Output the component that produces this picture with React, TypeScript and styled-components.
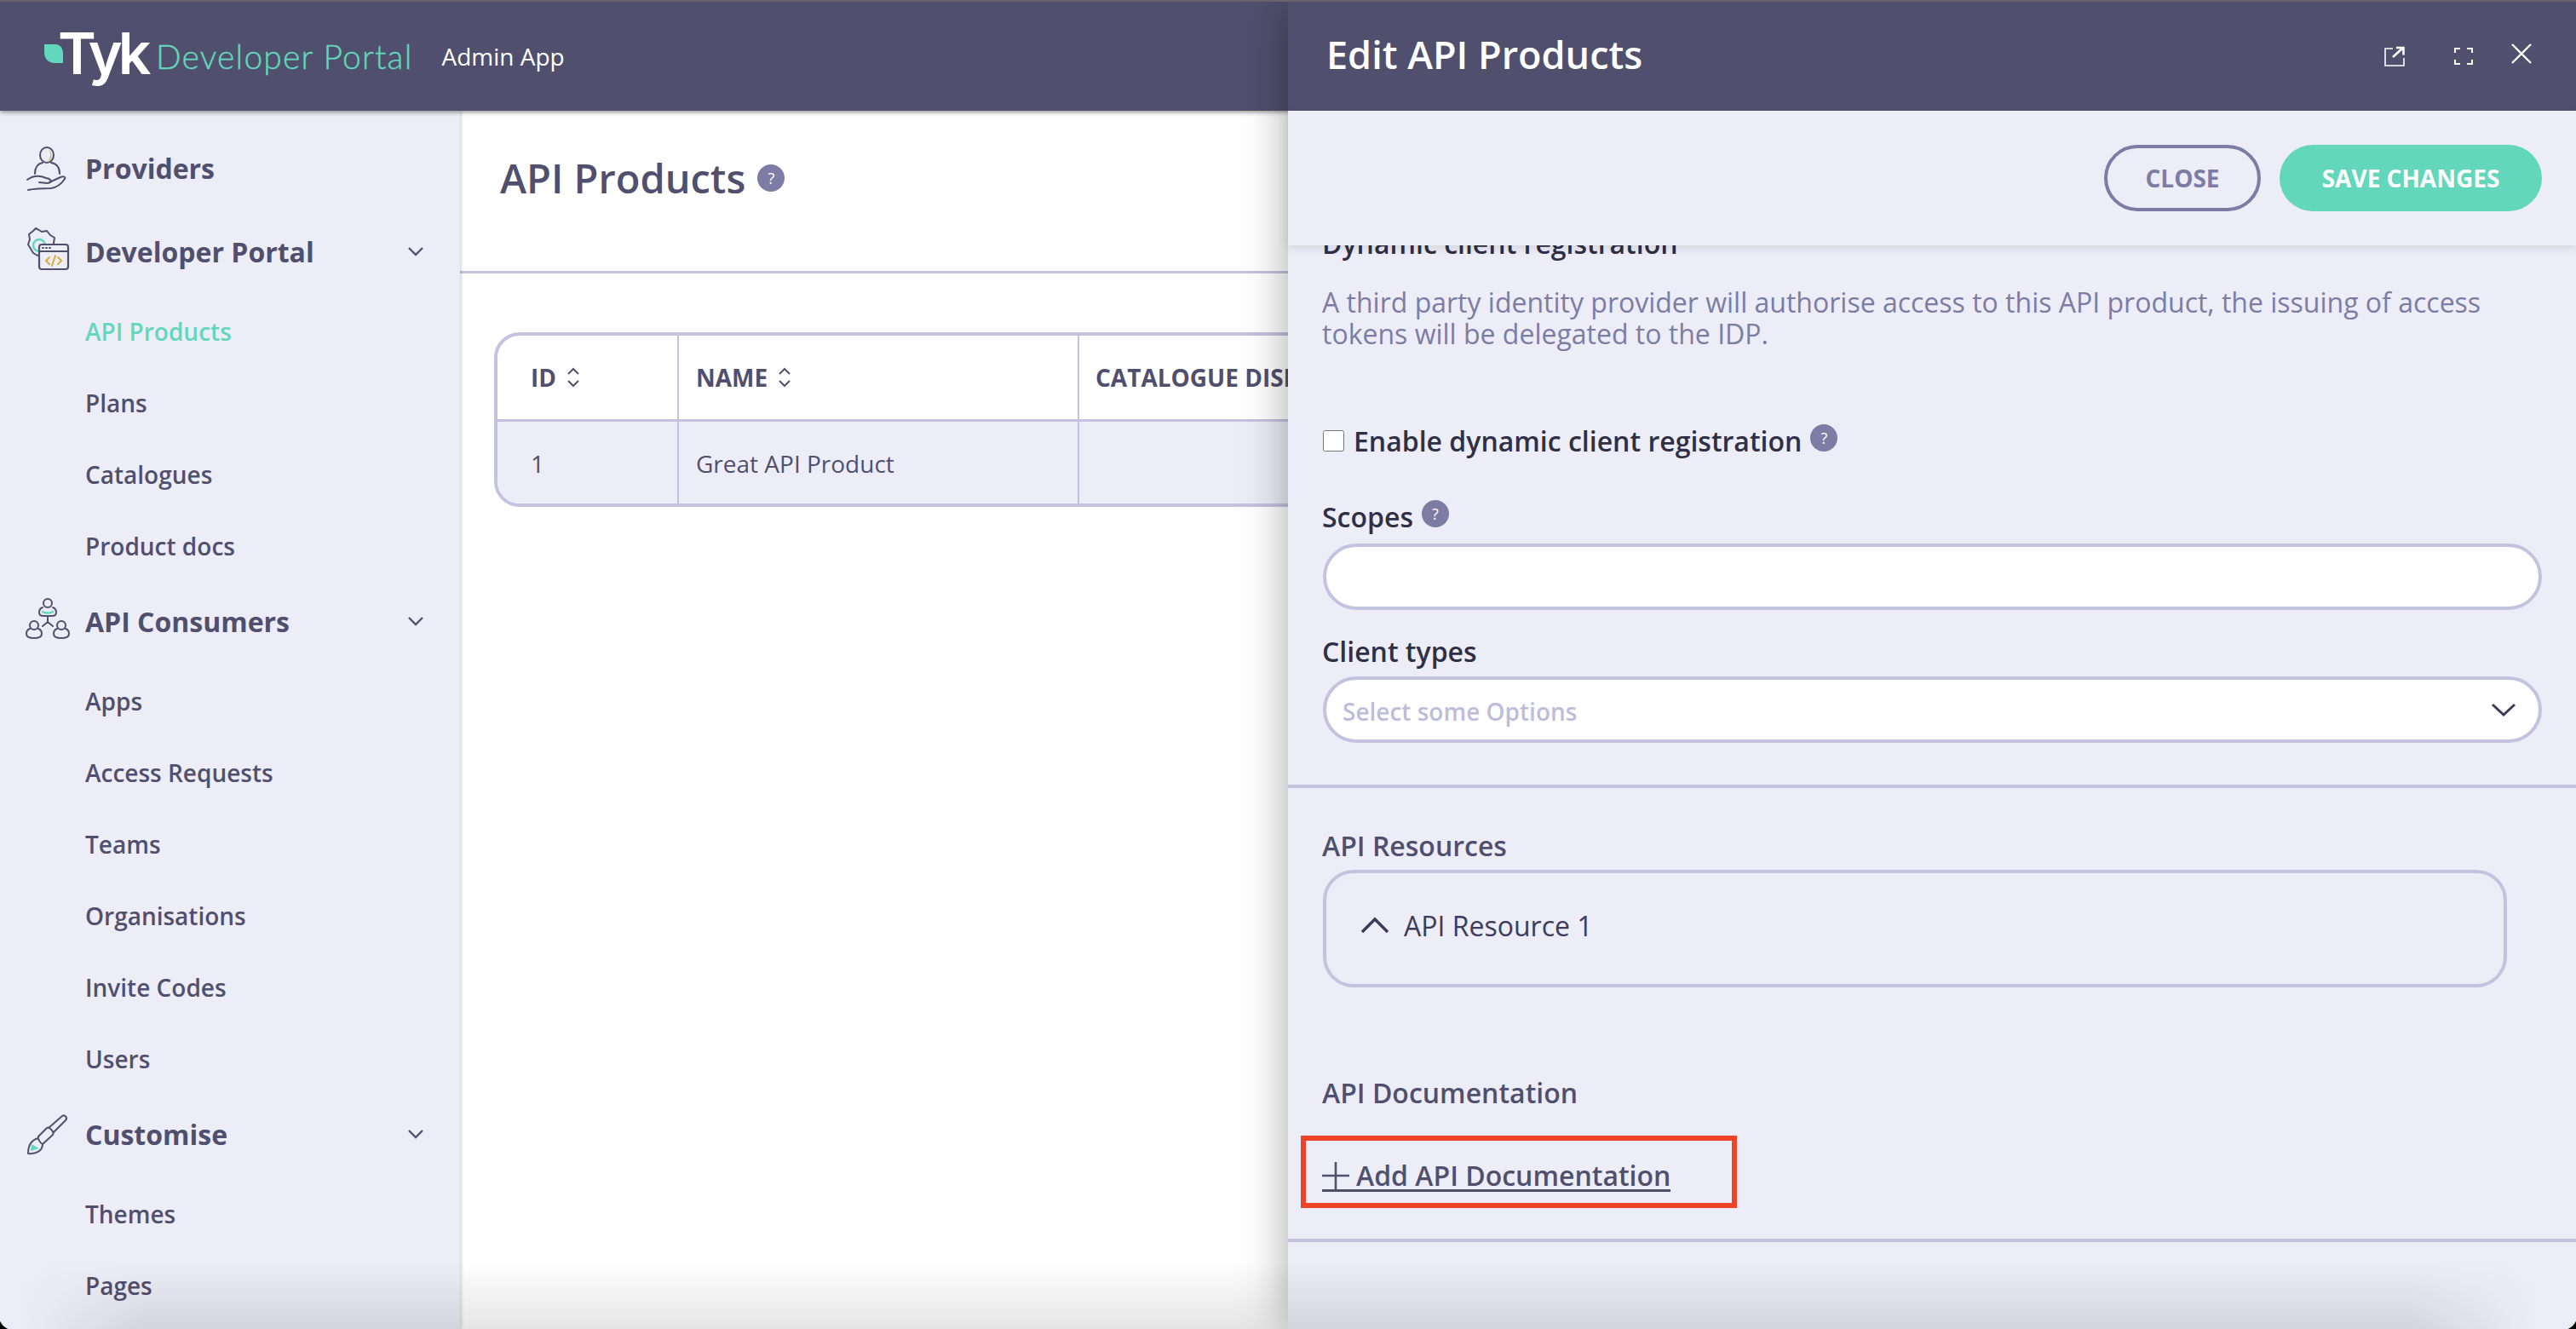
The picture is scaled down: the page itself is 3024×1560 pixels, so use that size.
import React from "react";
import styled, { createGlobalStyle } from "styled-components";

const Global = createGlobalStyle`
  html, body { margin: 0; padding: 0; background: #000; }
  * { box-sizing: border-box; }
`;

const Chevron = () => (
  <svg width="20" height="12" viewBox="0 0 20 12" fill="none" stroke="#50506e" strokeWidth="2.4">
    <polyline points="2,2 10,10 18,2" />
  </svg>
);

const SortIcon = () => (
  <svg width="16" height="24" viewBox="0 0 16 24" fill="none" stroke="#50506e" strokeWidth="2">
    <polyline points="2,8 8,2 14,8" />
    <polyline points="2,16 8,22 14,16" />
  </svg>
);

const ProvidersIcon = () => (
  <svg width="100" height="60" viewBox="0 0 100 60" fill="none" stroke="#50506e" strokeWidth="2" strokeLinecap="round">
    <ellipse cx="55" cy="15" rx="8" ry="9" />
    <path d="M56 8c4 2 5 10 0 14 6-1 6-12 0-14z" fill="#d4ae3a" stroke="none" />
    <path d="M41 37c0-8 4-12 9-13M60 24c6 1 10 5 10 13" />
    <path d="M32 44c7-5 15-5 22-2 7 1 8 6 1 6l-9-1" />
    <path d="M58 47l13-6c4-2 6 0 5 2-4 6-10 10-16 11-9 0-17 0-27 2" />
  </svg>
);

const PortalIcon = () => (
  <svg width="100" height="60" viewBox="0 0 100 60" fill="none" stroke="#50506e" strokeWidth="2" strokeLinecap="round" strokeLinejoin="round">
    <path d="M44 4l5 3 6-1 4 5 5 3-1 6 1 6-4 5-5 3-5-1-6 2-5-3-3-5-3-5 2-6-1-6 5-4 3-3z" />
    <circle cx="46" cy="23" r="7" stroke="#63d7bb" strokeWidth="2.4" />
    <rect x="46" y="22" width="34" height="29" rx="3" fill="#ededf7" strokeWidth="2.2" />
    <line x1="46" y1="30" x2="80" y2="30" />
    <path d="M50 26h1M54 26h1M58 26h1" />
    <path d="M58 37l-4 4 4 4M68 37l4 4-4 4M65 35l-4 12" stroke="#d4ae3a" />
  </svg>
);

const ConsumersIcon = () => (
  <svg width="100" height="60" viewBox="0 0 100 60" fill="none" stroke="#50506e" strokeWidth="2" strokeLinecap="round">
    <circle cx="56" cy="9" r="5" />
    <path d="M50 14c-3 1-4 3-4 6 0 3 2 4 5 4h10c3 0 5-1 5-4 0-3-1-5-4-6" />
    <path d="M50 19c3 2 9 2 12 0" stroke="#63d7bb" strokeWidth="2.6" />
    <path d="M56 25v6M56 31l-6 5M56 31l6 5" />
    <circle cx="40" cy="35" r="5" />
    <path d="M35 39c-3 1-4 3-4 6 0 3 3 5 9 5s9-2 9-5c0-3-1-5-4-6" />
    <circle cx="72" cy="35" r="5" />
    <path d="M67 39c-3 1-4 3-4 6 0 3 3 5 9 5s9-2 9-5c0-3-1-5-4-6" />
  </svg>
);

const BrushIcon = () => (
  <svg width="100" height="60" viewBox="0 0 100 60" fill="none" stroke="#50506e" strokeWidth="2" strokeLinecap="round" strokeLinejoin="round">
    <path d="M57 23L73 9c3-2 7 2 4 5L63 28" />
    <path d="M55 23L45 33c-1 2 2 8 5 9l12-11c2-3-4-10-7-8z" />
    <path d="M45 35c-8 2-12 7-12 18 9 1 17-3 17-11" />
    <path d="M37 42l9 5-10 3z" fill="#63d7bb" stroke="none" />
  </svg>
);

const HelpDot = () => <Help>?</Help>;

const subs1 = ["API Products", "Plans", "Catalogues", "Product docs"];
const subs2 = ["Apps", "Access Requests", "Teams", "Organisations", "Invite Codes", "Users"];
const subs3 = ["Themes", "Pages"];

export default function App() {
  return (
    <>
      <Global />
      <Page>
        <TopBar>
          <Leaf viewBox="0 0 22 22">
            <path d="M0 0h13c6 0 9 5 9 11v11H12C5 22 0 17 0 10z" fill="#63d7bb" />
          </Leaf>
          <Wordmark>Tyk</Wordmark>
          <Product>Developer Portal</Product>
          <AppName>Admin App</AppName>
        </TopBar>

        <Content>
          <Sidebar>
            <NavHead $gap={6}>
              <NavIcon><ProvidersIcon /></NavIcon>
              Providers
            </NavHead>
            <NavHead>
              <NavIcon><PortalIcon /></NavIcon>
              Developer Portal
              <NavChevron><Chevron /></NavChevron>
            </NavHead>
            <SubList>
              {subs1.map((s, i) => (
                <SubItem key={s} $active={i === 0}>{s}</SubItem>
              ))}
            </SubList>
            <NavHead>
              <NavIcon><ConsumersIcon /></NavIcon>
              API Consumers
              <NavChevron><Chevron /></NavChevron>
            </NavHead>
            <SubList>
              {subs2.map((s) => (
                <SubItem key={s}>{s}</SubItem>
              ))}
            </SubList>
            <NavHead>
              <NavIcon><BrushIcon /></NavIcon>
              Customise
              <NavChevron><Chevron /></NavChevron>
            </NavHead>
            <SubList>
              {subs3.map((s) => (
                <SubItem key={s}>{s}</SubItem>
              ))}
            </SubList>
          </Sidebar>

          <Main>
            <PageHead>
              <PageTitle>API Products</PageTitle>
              <HelpDot />
            </PageHead>
            <Table>
              <HeadCell $pad={39}>ID <SortIcon /></HeadCell>
              <HeadCell $pad={20}>NAME <SortIcon /></HeadCell>
              <HeadCell $pad={19} $last>CATALOGUE DISPLAY NAME</HeadCell>
              <BodyCell $pad={39}>1</BodyCell>
              <BodyCell $pad={20}>Great API Product</BodyCell>
              <BodyCell $pad={19} $last />
            </Table>
          </Main>
        </Content>

        <Drawer>
          <DrawerTop>
            <DrawerTitle>Edit API Products</DrawerTitle>
            <DrawerTools>
              <svg width="24" height="24" viewBox="0 0 24 24" fill="none" stroke="#fff" strokeWidth="1.6">
                <path d="M10 3H1v20h22v-9" />
                <path d="M10 13L22 2M14 2h8.5v8.5" strokeWidth="2.6" />
              </svg>
              <svg width="22" height="20" viewBox="0 0 22 20" fill="none" stroke="#fff" strokeWidth="2">
                <path d="M1 6V1h6M15 1h6v5M21 14v5h-6M7 19H1v-5" />
              </svg>
              <CloseGlyph width="24" height="24" viewBox="0 0 24 24" fill="none" stroke="#fff" strokeWidth="2.4">
                <path d="M1 1l22 22M23 1L1 23" />
              </CloseGlyph>
            </DrawerTools>
          </DrawerTop>
          <ActionBar>
            <GhostButton>CLOSE</GhostButton>
            <SaveButton>SAVE CHANGES</SaveButton>
          </ActionBar>
          <DrawerBody>
            <Section>
              <ClippedHeading>Dynamic client registration</ClippedHeading>
              <Description>
                A third party identity provider will authorise access to this API product, the issuing of access tokens will be delegated to the IDP.
              </Description>
              <CheckRow>
                <CheckBox type="checkbox" />
                <FieldLabel>Enable dynamic client registration</FieldLabel>
                <RaisedHelp><HelpDot /></RaisedHelp>
              </CheckRow>
              <LabelRow>
                <FieldLabel>Scopes</FieldLabel>
                <RaisedHelp><HelpDot /></RaisedHelp>
              </LabelRow>
              <TextField />
              <SelectLabel>Client types</SelectLabel>
              <SelectField>
                <Placeholder>Select some Options</Placeholder>
                <svg width="30" height="16" viewBox="0 0 30 16" fill="none" stroke="#3c3c5a" strokeWidth="3">
                  <polyline points="2,2 15,14 28,2" />
                </svg>
              </SelectField>
            </Section>
            <Resources>
              <SectionLabel>API Resources</SectionLabel>
              <ResourceBox>
                <svg width="34" height="20" viewBox="0 0 34 20" fill="none" stroke="#3c3c5a" strokeWidth="3.4">
                  <polyline points="2,18 17,3 32,18" />
                </svg>
                <ResourceName>API Resource 1</ResourceName>
              </ResourceBox>
              <DocsLabel>API Documentation</DocsLabel>
              <Annotated>
                <AddLink>
                  <svg width="32" height="32" viewBox="0 0 32 32" fill="none" stroke="#50506e" strokeWidth="2.6">
                    <path d="M16 0v32M0 16h32" />
                  </svg>
                  Add API Documentation
                </AddLink>
              </Annotated>
            </Resources>
          </DrawerBody>
        </Drawer>

        <BottomFade />
        <Corner $side="left" />
        <Corner $side="right" />
      </Page>
    </>
  );
}

const Page = styled.div`
  position: relative;
  width: 3024px;
  height: 1560px;
  overflow: hidden;
  background: #fff;
  font-family: "Open Sans", sans-serif;
  color: #50506e;
  border-top: 2px solid #66666a;
`;

const TopBar = styled.header`
  position: relative;
  z-index: 2;
  display: flex;
  align-items: center;
  height: 128px;
  padding-left: 52px;
  background: #50506e;
  box-shadow: 0 2px 5px rgba(0, 0, 0, 0.4);
`;

const Leaf = styled.svg`
  width: 22px;
  height: 22px;
  margin-top: -6px;
`;

const Wordmark = styled.div`
  margin-left: -6px;
  margin-top: -8px;
  width: 115px;
  color: #fff;
  font-family: "Inter", sans-serif;
  font-size: 68px;
  font-weight: 600;
  letter-spacing: -5px;
  line-height: 1;
`;

const Product = styled.div`
  color: #63d7bb;
  font-family: "Lato", sans-serif;
  font-weight: 300;
  font-size: 39px;
  letter-spacing: 1.2px;
  -webkit-text-stroke: 0.4px #63d7bb;
`;

const AppName = styled.div`
  margin-left: 34px;
  color: #fff;
  font-size: 28px;
`;

const Content = styled.div`
  display: flex;
  height: 1430px;
`;

const Sidebar = styled.nav`
  position: relative;
  z-index: 1;
  flex: 0 0 540px;
  padding-top: 21px;
  background: #ededf7;
  box-shadow: 1px 0 4px rgba(0, 0, 0, 0.22);
`;

const NavHead = styled.div<{ $gap?: number }>`
  display: flex;
  align-items: center;
  height: 92px;
  margin-bottom: ${(p) => p.$gap ?? 0}px;
  font-size: 32px;
  font-weight: 700;
`;

const NavIcon = styled.span`
  display: flex;
  flex: 0 0 100px;
`;

const NavChevron = styled.span`
  display: flex;
  margin-left: auto;
  margin-right: 42px;
`;

const SubList = styled.div`
  padding-top: 6px;
`;

const SubItem = styled.div<{ $active?: boolean }>`
  display: flex;
  align-items: center;
  height: 84px;
  padding-left: 100px;
  font-size: 28px;
  font-weight: 600;
  color: ${(p) => (p.$active ? "#63d7bb" : "#50506e")};
`;

const Main = styled.main`
  flex: 1;
  min-width: 0;
  padding-left: 40px;
`;

const PageHead = styled.div`
  display: flex;
  align-items: center;
  gap: 14px;
  height: 191px;
  margin-left: -40px;
  padding: 0 0 31px 47px;
  border-bottom: 3px solid #c3c3e0;
`;

const PageTitle = styled.h1`
  margin: 0;
  font-family: "Open Sans", sans-serif;
  font-size: 47px;
  font-weight: 600;
  color: #50506e;
`;

const Help = styled.span`
  display: inline-flex;
  align-items: center;
  justify-content: center;
  width: 32px;
  height: 32px;
  border-radius: 50%;
  background: #7c7ca4;
  color: #fff;
  font-size: 18px;
  font-weight: 400;
  font-family: "Open Sans", sans-serif;
`;

const Table = styled.div`
  display: grid;
  grid-template-columns: 213px 470px 1000px;
  grid-template-rows: 101px 96px;
  width: 1700px;
  margin-top: 69px;
  border: 4px solid #c3c3e0;
  border-radius: 30px;
  overflow: hidden;
`;

const HeadCell = styled.div<{ $pad: number; $last?: boolean }>`
  display: flex;
  align-items: center;
  gap: 12px;
  padding-left: ${(p) => p.$pad}px;
  border-right: ${(p) => (p.$last ? "none" : "2px solid #c3c3e0")};
  border-bottom: 3px solid #c3c3e0;
  font-size: 28px;
  font-weight: 700;
  white-space: nowrap;
`;

const BodyCell = styled.div<{ $pad: number; $last?: boolean }>`
  display: flex;
  align-items: center;
  padding: 2px 0 0 ${(p) => p.$pad}px;
  background: #ededf7;
  border-right: ${(p) => (p.$last ? "none" : "2px solid #c3c3e0")};
  font-size: 28px;
`;

const Drawer = styled.aside`
  position: absolute;
  z-index: 3;
  top: 0;
  right: 0;
  bottom: 0;
  width: 1512px;
  display: flex;
  flex-direction: column;
  background: #ededf7;
  box-shadow: 0 0 50px rgba(0, 0, 0, 0.35);
`;

const DrawerTop = styled.div`
  display: flex;
  align-items: center;
  justify-content: space-between;
  flex: 0 0 128px;
  padding: 0 52px 0 45px;
  background: #50506e;
`;

const DrawerTitle = styled.h2`
  margin: 0 0 6px;
  color: #fff;
  font-family: "Open Sans", sans-serif;
  font-size: 45px;
  font-weight: 600;
`;

const DrawerTools = styled.div`
  display: flex;
  align-items: center;
  gap: 58px;
`;

const CloseGlyph = styled.svg`
  margin: -6px 0 0 -13px;
`;

const ActionBar = styled.div`
  position: relative;
  z-index: 1;
  display: flex;
  justify-content: flex-end;
  align-items: center;
  gap: 22px;
  flex: 0 0 158px;
  padding: 0 40px 1px 0;
  background: #ededf7;
  box-shadow: 0 4px 10px rgba(0, 0, 0, 0.1);
`;

const GhostButton = styled.button`
  width: 184px;
  height: 78px;
  border: 4px solid #7c7ca4;
  border-radius: 39px;
  background: transparent;
  color: #7c7ca4;
  font: 700 28px "Open Sans", sans-serif;
`;

const SaveButton = styled.button`
  width: 308px;
  height: 78px;
  border: none;
  border-radius: 39px;
  background: #63d7bb;
  color: #fff;
  font: 700 28px "Open Sans", sans-serif;
`;

const DrawerBody = styled.div`
  flex: 1;
  overflow: hidden;
`;

const Section = styled.section`
  padding: 0 40px 50px 40px;
  height: 659px;
  border-bottom: 4px solid #c3c3e0;
`;

const ClippedHeading = styled.div`
  margin-top: -22px;
  height: 40px;
  line-height: 40px;
  font-size: 32px;
  font-weight: 600;
  color: #2f2f45;
`;

const Description = styled.p`
  margin: 30px 0 0;
  width: 1400px;
  font-size: 32px;
  line-height: 37px;
  color: #7c7ca4;
`;

const CheckRow = styled.label`
  display: flex;
  align-items: center;
  margin-top: 87px;
  height: 40px;
`;

const CheckBox = styled.input`
  width: 25px;
  height: 25px;
  margin: 0 11px 0 1px;
`;

const FieldLabel = styled.span`
  font-size: 32px;
  font-weight: 600;
  color: #2f2f45;
`;

const RaisedHelp = styled.span`
  display: flex;
  margin: -6px 0 0 10px;
`;

const LabelRow = styled.div`
  display: flex;
  align-items: center;
  margin-top: 49px;
  height: 40px;
`;

const TextField = styled.div`
  height: 78px;
  margin: 12px 0 0 1px;
  border: 4px solid #c3c3e0;
  border-radius: 39px;
  background: #fff;
`;

const SelectLabel = styled.div`
  margin-top: 29px;
  height: 40px;
  line-height: 40px;
  font-size: 32px;
  font-weight: 600;
  color: #2f2f45;
`;

const SelectField = styled(TextField)`
  display: flex;
  align-items: center;
  justify-content: space-between;
  padding: 0 26px 0 19px;
  margin-top: 9px;
`;

const Placeholder = styled.span`
  padding-top: 3px;
  font-size: 28px;
  font-weight: 600;
  color: #bdbddb;
`;

const Resources = styled.section`
  padding: 48px 40px 0 40px;
  height: 533px;
  border-bottom: 4px solid #c3c3e0;
`;

const SectionLabel = styled.div`
  height: 40px;
  line-height: 40px;
  font-size: 32px;
  font-weight: 600;
`;

const ResourceBox = styled.div`
  display: flex;
  align-items: center;
  gap: 17px;
  width: 1390px;
  height: 138px;
  margin: 8px 0 0 1px;
  padding: 0 0 8px 40px;
  border: 4px solid #c3c3e0;
  border-radius: 36px;
`;

const ResourceName = styled.span`
  font-size: 32px;
  font-weight: 500;
  color: #3c3c5a;
`;

const DocsLabel = styled(SectionLabel)`
  margin-top: 104px;
`;

const Annotated = styled.div`
  display: flex;
  align-items: flex-start;
  width: 512px;
  height: 85px;
  margin: 30px 0 0 -25px;
  padding: 24px 0 0 19px;
  border: 6px solid #ee4327;
`;

const AddLink = styled.a`
  display: inline-flex;
  align-items: flex-end;
  gap: 8px;
  height: 36px;
  line-height: 32px;
  font-size: 32px;
  font-weight: 600;
  color: #50506e;
  border-bottom: 3px solid #50506e;
`;

const BottomFade = styled.div`
  position: absolute;
  z-index: 4;
  left: 0;
  right: 0;
  bottom: 0;
  height: 80px;
  background: linear-gradient(to bottom, rgba(0, 0, 0, 0), rgba(0, 0, 0, 0.1));
  mask-image: linear-gradient(to right, transparent 20px, #000 170px, #000 2830px, transparent 2980px);
  pointer-events: none;
`;

const Corner = styled.div<{ $side: "left" | "right" }>`
  position: absolute;
  z-index: 5;
  bottom: -2px;
  ${(p) => p.$side}: -2px;
  width: 24px;
  height: 24px;
  border-radius: ${(p) => (p.$side === "left" ? "0 0 0 20px" : "0 0 20px 0")};
  box-shadow: 0 0 0 10px #000;
  clip-path: inset(0);
`;
